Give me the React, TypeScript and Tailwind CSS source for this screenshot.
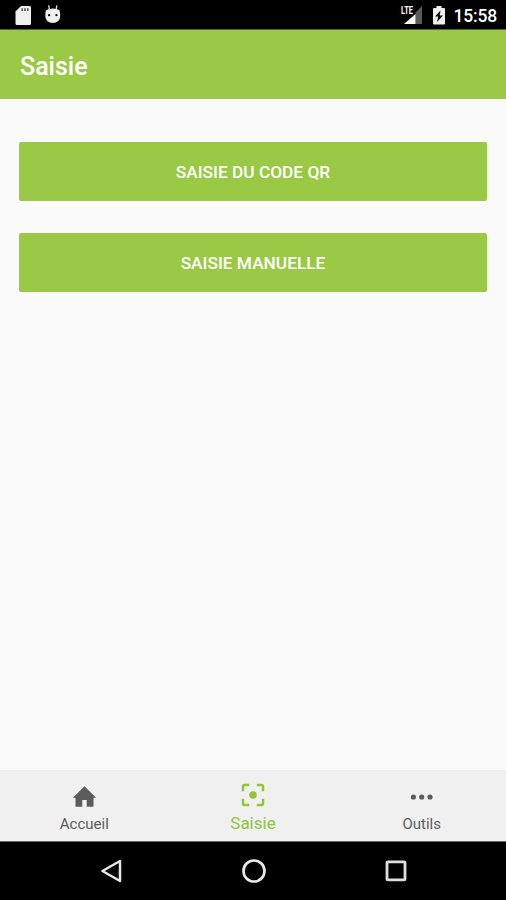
import { useState } from 'react';

const TABS = [
    { id: 'accueil', label: 'Accueil' },
    { id: 'saisie', label: 'Saisie' },
    { id: 'outils', label: 'Outils' },
];

function TabIcon({ id }: { id: string }) {
    switch (id) {
        case 'accueil':
            return (
                <svg width="27" height="27" viewBox="0 0 24 24" fill="currentColor">
                    <path d="M10 21v-6h4v6h6v-8h2.300L12 2.800 1.700 13H4v8z" />
                </svg>
            );
        case 'saisie':
            return (
                <svg width="30" height="30" viewBox="0 0 24 24" fill="currentColor">
                    <path d="M5 15H3v4c0 1.1.9 2 2 2h4v-2H5v-4zM5 5h4V3H5c-1.1 0-2 .9-2 2v4h2V5zm14-2h-4v2h4v4h2V5c0-1.1-.9-2-2-2zm0 16h-4v2h4c1.1 0 2-.9 2-2v-4h-2v4z" />
                    <circle cx="12" cy="12" r="3" />
                </svg>
            );
        default:
            return (
                <svg width="27" height="27" viewBox="0 0 27 27" fill="currentColor">
                    <circle cx="5.400" cy="14" r="2.600" />
                    <circle cx="13.700" cy="14" r="2.600" />
                    <circle cx="22" cy="14" r="2.600" />
                </svg>
            );
    }
}

function StatusBar() {
    return (
        <div className="flex h-[29px] shrink-0 items-start justify-between bg-black pl-[15px] pr-[9px] text-white">
            <div className="flex gap-[13px] pt-[5px]">
                <svg width="17" height="21" viewBox="0 0 17 21">
                    <path d="M6 1h8.500Q16 1 16 2.500V18.500Q16 20 14.500 20H2Q.5 20 .5 18.500V6.500z" fill="#f0f0f0" />
                    <path d="M7.200 3.300v2.800M10 3.300v2.800M12.800 3.300v2.800" stroke="#555" strokeWidth="1.600" />
                </svg>
                <svg width="16" height="20" viewBox="0 0 16 20">
                    <path d="M3.600.3l.9 4.500M11.900.3l-.9 4.500" stroke="#e0e0e0" strokeWidth="1.300" />
                    <path d="M1 5.200Q4 3.600 7.800 3.600t6.700 1.600Q15.300 7.500 15.200 11.500 14.600 18 7.800 18T.3 11.500Q.2 7.500 1 5.200z" fill="#f0f0f0" />
                    <circle cx="4.100" cy="10.200" r="1.100" fill="#000" />
                    <circle cx="11.400" cy="10.200" r="1.100" fill="#000" />
                </svg>
            </div>
            <div className="flex pt-[5px]">
                <svg width="22" height="20" viewBox="0 0 22 20">
                    <path d="M21 1v18H14.500V7.500z" fill="#5a5a5a" />
                    <path d="M14.500 9v10H3z" fill="#fff" />
                    <text x="0" y="8.800" fill="#fff" fontSize="10" fontWeight="700" textLength="12" lengthAdjust="spacingAndGlyphs">LTE</text>
                </svg>
                <svg className="ml-[9px]" width="14" height="20" viewBox="0 0 14 20">
                    <path d="M4.500 1h5v2H12q1 0 1 1v14.500q0 1-1 1H2q-1 0-1-1V4q0-1 1-1h2.500z" fill="#f0f0f0" />
                    <path d="M8.500 5.500L3 11.500H6.200L5 17 11 10.500H7.700z" fill="#000" />
                </svg>
                <span className="ml-[8px] pt-px text-[17.500px] font-medium leading-[21px] tracking-[-0.200px]">15:58</span>
            </div>
        </div>
    );
}

export default function App() {
    const [active, setActive] = useState('saisie');

    return (
        <div className="flex h-[900px] w-[506px] flex-col overflow-hidden bg-[#fafafa] font-[Roboto,sans-serif]">
            <StatusBar />

            {/* Header */}
            <header className="flex h-[70px] shrink-0 items-center border-t border-[#4e6a20] bg-[#99c945] pl-5 pt-[4px]">
                <h1 className="text-[25px] font-medium leading-8 text-white">Saisie</h1>
            </header>

            {/* Actions */}
            <main className="flex flex-1 flex-col gap-8 px-[19px] pt-[43px]">
                <button className="h-[59px] rounded-[2px] bg-[#99c945] pt-[2px] text-[17.300px] font-medium text-white">
                    SAISIE DU CODE QR
                </button>
                <button className="h-[59px] rounded-[2px] bg-[#99c945] pt-[2px] text-[17.300px] font-medium text-white">
                    SAISIE MANUELLE
                </button>
            </main>

            {/* Tabs */}
            <nav className="grid h-[71px] shrink-0 grid-cols-3 bg-[#f0f0f0]">
                {TABS.map((tab) => (
                    <button
                        key={tab.id}
                        onClick={() => setActive(tab.id)}
                        className={`flex flex-col items-center ${active === tab.id ? 'pt-[10px] text-[#8fc63a]' : 'pt-[13px] text-[#5c5c5c]'}`}
                    >
                        <TabIcon id={tab.id} />
                        <span className={active === tab.id ? 'mt-[3px] text-[17px] leading-5' : 'mt-[4px] text-[15px] leading-5'}>
                            {tab.label}
                        </span>
                    </button>
                ))}
            </nav>

            {/* System navigation */}
            <div className="flex h-[59px] shrink-0 items-center justify-between border-t border-[#666] bg-black pl-[99px] pr-[98px]">
                <svg width="24" height="26" viewBox="0 0 24 26" fill="none" stroke="#e8e8e8" strokeWidth="2.500" strokeLinejoin="round">
                    <path d="M21 3v20L3.500 13z" />
                </svg>
                <svg width="26" height="26" viewBox="0 0 26 26" fill="none" stroke="#e8e8e8" strokeWidth="2.700">
                    <circle cx="13" cy="13" r="10.500" />
                </svg>
                <svg width="24" height="26" viewBox="0 0 24 26" fill="none" stroke="#dedede" strokeWidth="2.800">
                    <rect x="3" y="3.800" width="18" height="18" rx="0.800" />
                </svg>
            </div>
        </div>
    );
}
